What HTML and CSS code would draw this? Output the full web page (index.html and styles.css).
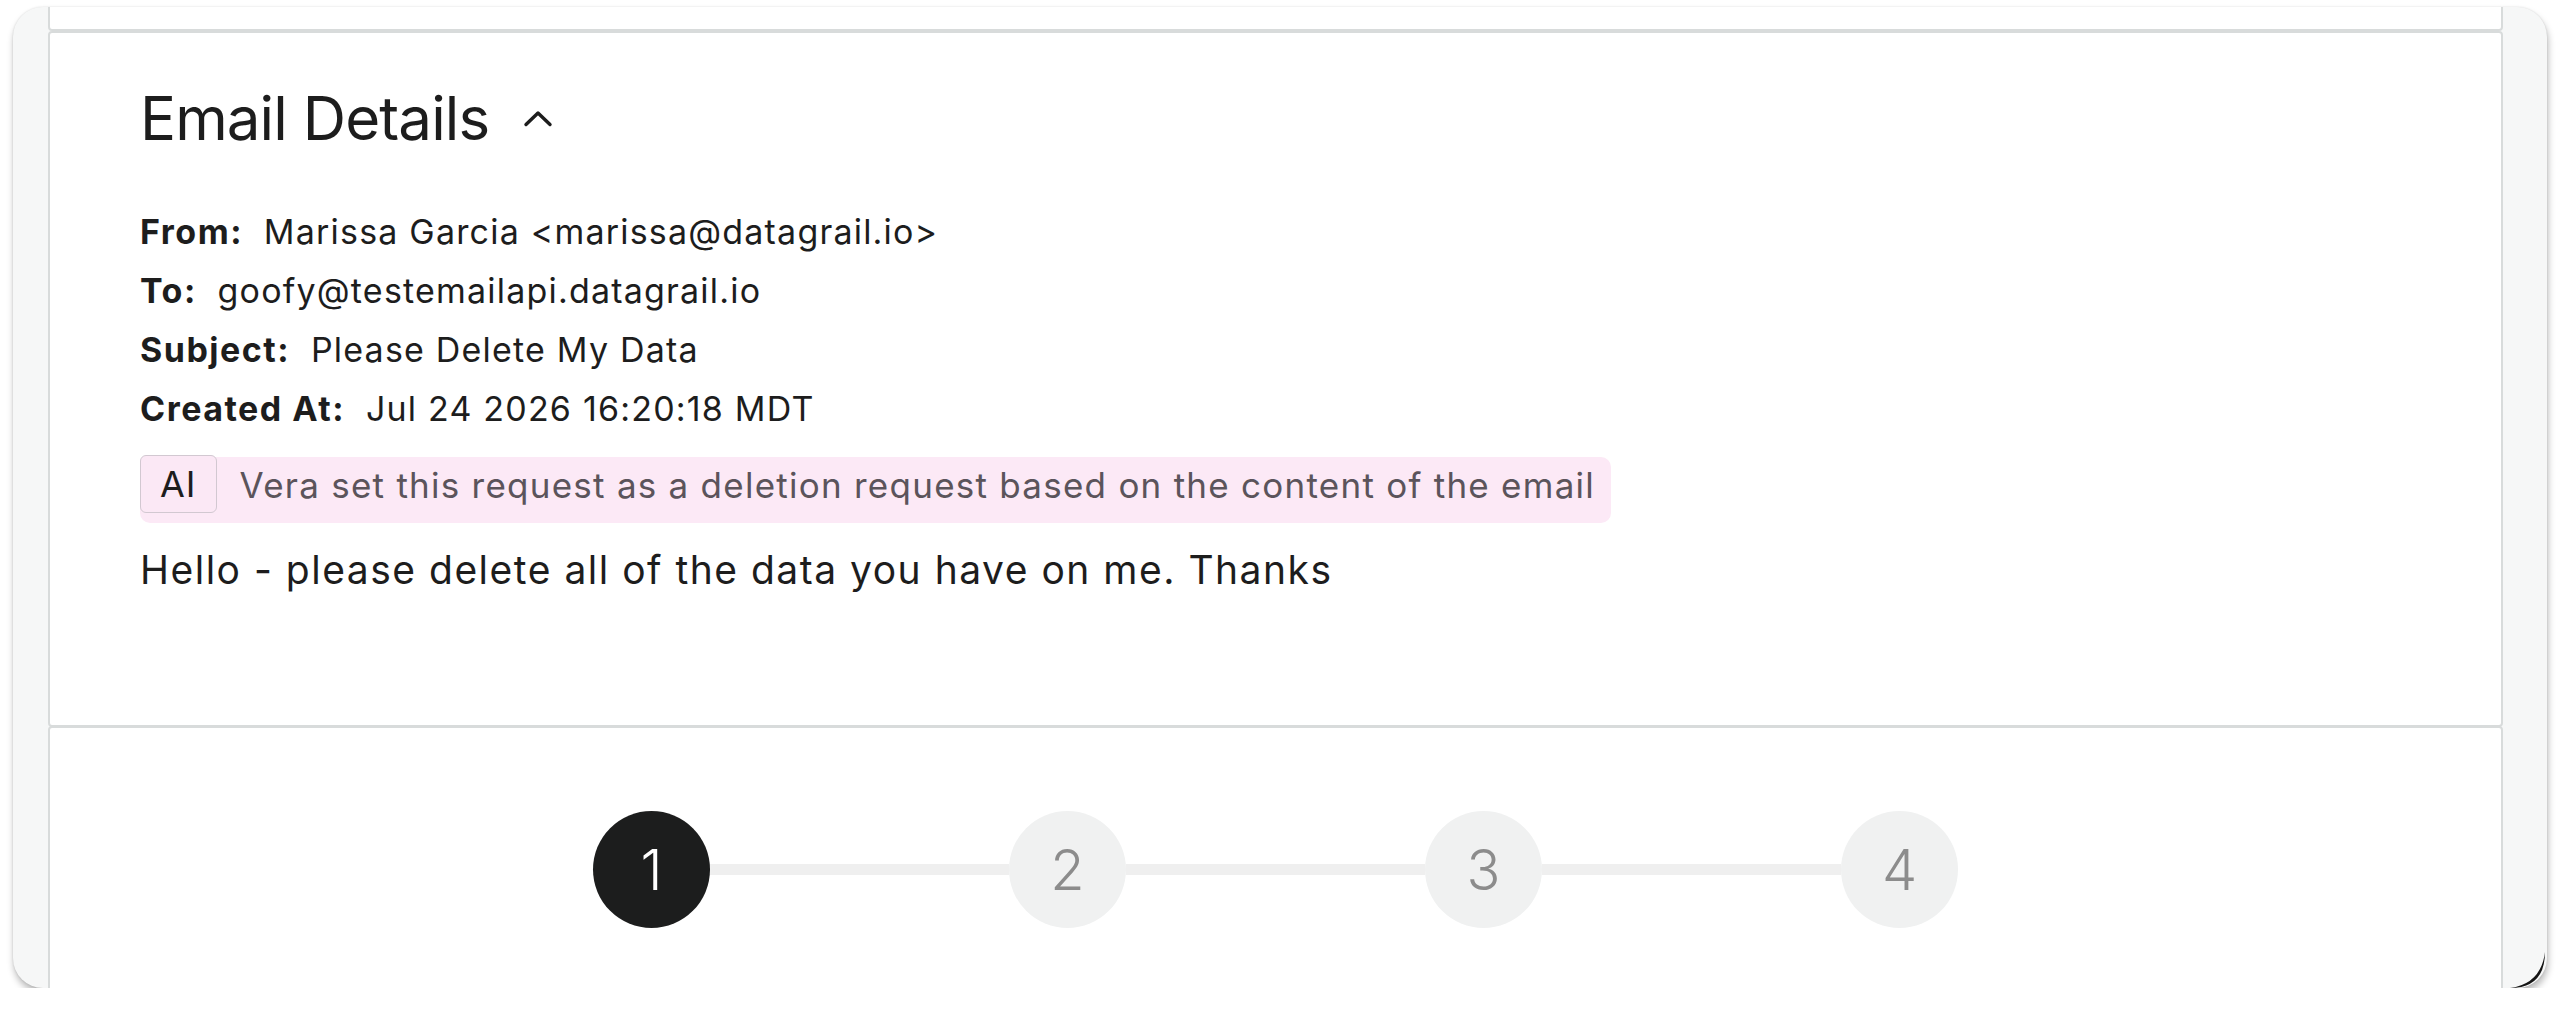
FILE: index.html
```
<!DOCTYPE html>
<html lang="en">
<head>
    <meta charset="UTF-8">
    <meta name="viewport" content="width=device-width, initial-scale=1.0">
    <title>Request - Email Details</title>
    <link rel="stylesheet" href="styles.css">
</head>
<body>
    <div class="window">
        <div class="stack">
            <section class="card card-prev"></section>

            <section class="card email">
                <div class="email-head">
                    <h2>Email Details</h2>
                    <svg class="chevron" width="30" height="17" viewBox="0 0 30 17">
                        <polyline points="3,14.5 15,3 27,14.5" fill="none" stroke="#1d1d1d" stroke-width="3.4" stroke-linecap="round" stroke-linejoin="round"/>
                    </svg>
                </div>

                <div class="fields">
                    <div class="field"><b>From:</b> Marissa Garcia &lt;marissa@datagrail.io&gt;</div>
                    <div class="field"><b>To:</b> goofy@testemailapi.datagrail.io</div>
                    <div class="field"><b>Subject:</b> Please Delete My Data</div>
                    <div class="field"><b>Created At:</b> Jul 24 2026 16:20:18 MDT</div>
                </div>

                <div class="ai-note">
                    <span class="ai-badge">AI</span>
                    <span class="ai-text">Vera set this request as a deletion request based on the content of the email</span>
                </div>

                <p class="email-body">Hello - please delete all of the data you have on me. Thanks</p>
            </section>

            <section class="card steps">
                <div class="stepper">
                    <div class="step active">1</div>
                    <div class="step-line"></div>
                    <div class="step">2</div>
                    <div class="step-line"></div>
                    <div class="step">3</div>
                    <div class="step-line"></div>
                    <div class="step">4</div>
                </div>
            </section>
        </div>

        <svg class="corner-glint" width="40" height="40" viewBox="0 0 40 40">
            <path d="M3 40 Q38 40 38 4 Q34 36 3 40 Z" fill="#151515"/>
        </svg>
    </div>
</body>
</html>
```

FILE: styles.css
```
body {
    margin: 0;
    background: #ffffff;
    font-family: Inter, "Noto Sans", sans-serif;
    color: #1d1d1d;
}
.window {
    position: relative;
    margin: 7px 13px 0;
    height: 981px;
    background: #f6f7f7;
    border-radius: 30px;
    overflow: hidden;
    box-shadow: 1px 5px 7px rgba(0,0,0,0.28), 0 0 2px rgba(0,0,0,0.12);
}
.stack {
    display: flex;
    flex-direction: column;
    padding: 0 44px 0 35px;
}
.card {
    background: #ffffff;
    border: 2px solid #d8dbdb;
    border-radius: 4px;
}
.card-prev {
    margin-top: -10px;
    height: 30px;
    flex-shrink: 0;
}
.email {
    padding: 49px 90px 0 90px;
    box-sizing: border-box;
    height: 696px;
    flex-shrink: 0;
}
.email-head {
    display: flex;
    align-items: center;
    gap: 34px;
}
.email-head h2 {
    margin: 0;
    font-size: 60px;
    font-weight: 400;
    line-height: 72px;
    letter-spacing: -0.9px;
}
.fields {
    margin-top: 48px;
}
.field {
    font-size: 34px;
    line-height: 59px;
    letter-spacing: 1.2px;
}
.field b {
    font-weight: 700;
    letter-spacing: 1.5px;
    margin-right: 10px;
}
.ai-note {
    display: inline-flex;
    align-items: flex-start;
    gap: 23px;
    margin-top: 19px;
    padding: 0 16px 10px 0;
    background: #fce9f6;
    border-radius: 10px;
}
.ai-badge {
    margin-top: -2px;
    padding: 0 19px;
    height: 56px;
    line-height: 56px;
    font-size: 36px;
    letter-spacing: 1px;
    color: #1d1d1d;
    border: 1.5px solid #d2c8d1;
    border-radius: 6px;
    background: #fbe8f5;
}
.ai-text {
    font-size: 35px;
    line-height: 56px;
    letter-spacing: 1.25px;
    color: #5b545b;
}
.email-body {
    margin: 20px 0 0;
    font-size: 39px;
    line-height: 54px;
    letter-spacing: 1.5px;
}
.steps {
    height: 300px;
    margin-top: -1px;
    padding-top: 83px;
    box-sizing: border-box;
    flex-shrink: 0;
}
.stepper {
    display: flex;
    align-items: center;
    justify-content: center;
}
.step {
    width: 117px;
    height: 117px;
    border-radius: 50%;
    background: #f0f1f1;
    color: #8c8c8c;
    font-size: 56px;
    font-weight: 300;
    display: flex;
    align-items: center;
    justify-content: center;
    flex-shrink: 0;
}
.step.active {
    background: #1c1d1d;
    color: #ffffff;
}
.step-line {
    width: 299px;
    height: 11px;
    background: #efefef;
}
.corner-glint {
    position: absolute;
    right: 0;
    bottom: 0;
}
```
